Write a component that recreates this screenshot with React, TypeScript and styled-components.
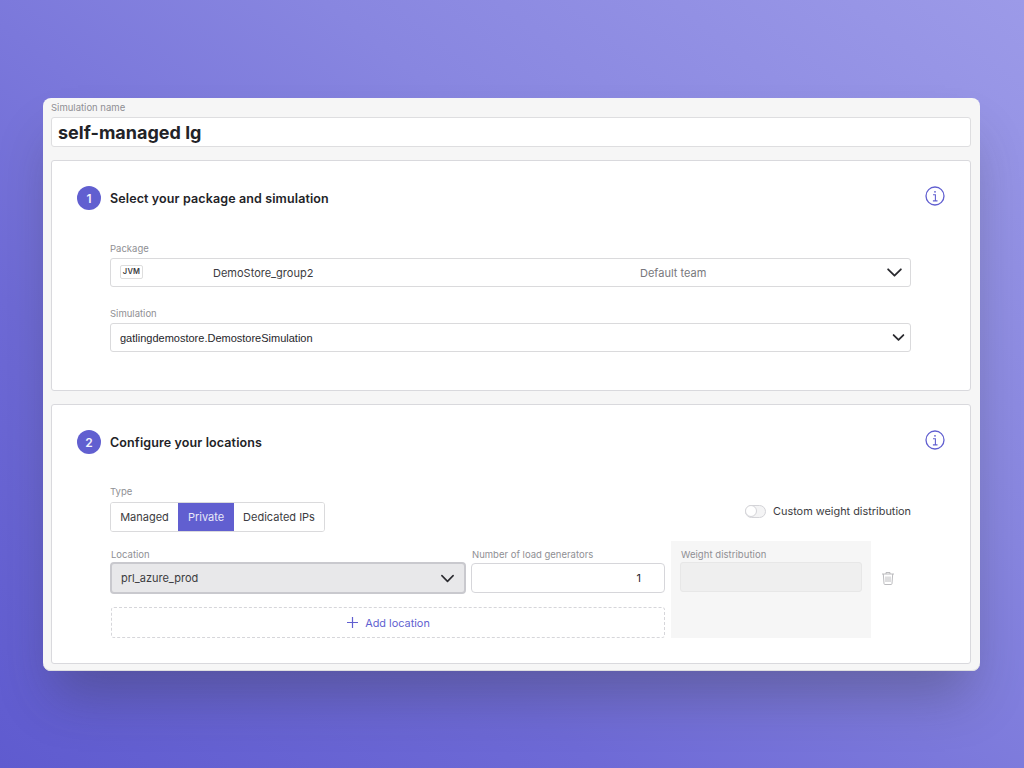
import React from 'react';
import styled, { createGlobalStyle } from 'styled-components';

const GlobalStyle = createGlobalStyle`
  html, body {
    margin: 0;
    padding: 0;
  }
  body {
    font-family: Inter, "Liberation Sans", sans-serif;
    color: #26262b;
  }
`;

const Page = styled.div`
  width: 1024px;
  height: 768px;
  box-sizing: border-box;
  padding: 98px 44px 0 43px;
  overflow: hidden;
  background: linear-gradient(218deg, #9c9ae8 0%, #8886e0 35%, #6e6ad6 70%, #5f5bcf 100%);
`;

const Card = styled.main`
  height: 573px;
  box-sizing: border-box;
  padding: 0 9px 0 8px;
  background: #f6f6f6;
  border-radius: 8px;
  box-shadow: inset 0 -1px 0 #dedee0, 0 34px 50px -10px rgba(50, 50, 50, 0.32);
`;

const NameField = styled.div`
  height: 50px;
  padding-top: 4px;
  box-sizing: border-box;
`;

const NameInput = styled.div`
  height: 30px;
  box-sizing: border-box;
  margin-top: 4px;
  padding-left: 6px;
  display: flex;
  align-items: center;
  background: #fff;
  border: 1px solid #dedee0;
  border-radius: 3px;
  font-size: 18px;
  font-weight: 700;
  color: #232327;
`;

const Label = styled.div`
  font-size: 9.5px;
  line-height: 11px;
  color: #8f8f94;
`;

const Section = styled.section<{ $height: number }>`
  height: ${p => p.$height}px;
  box-sizing: border-box;
  margin-top: 13px;
  padding: 25px 25px 0 25px;
  background: #fff;
  border: 1px solid #d9d9dd;
  border-radius: 3px;
  &:first-of-type {
    margin-top: 12px;
  }
`;

const SectionHead = styled.div`
  display: flex;
  align-items: flex-start;
  height: 24px;
`;

const StepBadge = styled.div`
  width: 24px;
  height: 24px;
  border-radius: 50%;
  display: flex;
  align-items: center;
  justify-content: center;
  background: #615fd0;
  color: #f4f4fc;
  font-size: 12px;
  font-weight: 600;
`;

const SectionTitle = styled.h2`
  flex: 1;
  margin: 0 0 0 9px;
  padding-top: 1px;
  font-size: 12.5px;
  line-height: 24px;
  font-weight: 600;
  letter-spacing: 0.12px;
  color: #232327;
`;

const InfoIcon = styled.svg`
  width: 20px;
  height: 20px;
`;

const SectionBody = styled.div`
  width: 801px;
  margin-left: 33px;
`;

const SelectBox = styled.div`
  height: 29px;
  margin-top: 4px;
  box-sizing: border-box;
  position: relative;
  display: flex;
  align-items: center;
  background: #fff;
  border: 1px solid #dadadc;
  border-radius: 3px;
  font-size: 11px;
  color: #3c3c41;
`;

const JvmBadge = styled.span`
  width: 23px;
  height: 14px;
  margin: -2px 0 0 9px;
  box-sizing: border-box;
  display: flex;
  align-items: center;
  justify-content: center;
  border: 1px solid #dedede;
  border-radius: 2px;
  font-size: 7.5px;
  font-weight: 600;
  letter-spacing: 0.2px;
  color: #3b3b40;
`;

const PackageName = styled.span`
  width: 427px;
  margin-left: 70px;
`;

const TeamName = styled.span`
  flex: 1;
  color: #77777c;
`;

const Chevron = styled.svg<{ $size: number; $inset: number }>`
  position: absolute;
  top: 50%;
  right: ${p => p.$inset}px;
  width: ${p => p.$size}px;
  height: ${p => p.$size}px;
  margin-top: ${p => -p.$size / 2}px;
`;

const NativeValue = styled.span`
  margin-left: 9px;
  font-family: "Liberation Sans", Arial, sans-serif;
  font-size: 11px;
  color: #26262b;
`;

const PackageBlock = styled.div`
  margin-top: 33px;
`;

const SimulationBlock = styled.div`
  margin-top: 21px;
`;

const TypeRow = styled.div`
  margin-top: 32px;
  display: flex;
  justify-content: space-between;
  align-items: flex-end;
`;

const Segmented = styled.div`
  display: flex;
  height: 30px;
  margin-top: 5px;
  box-sizing: border-box;
  border: 1px solid #dadadc;
  border-radius: 3px;
  overflow: hidden;
`;

const Segment = styled.div<{ $active?: boolean; $width: number }>`
  width: ${p => p.$width}px;
  display: flex;
  align-items: center;
  justify-content: center;
  font-size: 11px;
  color: ${p => (p.$active ? '#e9e9f8' : '#3c3c41')};
  background: ${p => (p.$active ? '#615fd0' : '#fff')};
`;

const WeightToggle = styled.div`
  display: flex;
  align-items: center;
  height: 14px;
  margin-bottom: 14px;
  font-size: 10.9px;
  color: #3c3c41;
`;

const ToggleTrack = styled.span`
  width: 21px;
  height: 13px;
  margin-right: 7px;
  box-sizing: border-box;
  border: 1.5px solid #d4d4d8;
  border-radius: 7px;
  position: relative;
  background: #f4f4f5;
  &::before {
    content: '';
    position: absolute;
    left: -1px;
    top: -1px;
    width: 12px;
    height: 12px;
    box-sizing: border-box;
    border: 1px solid #d4d4d8;
    border-radius: 50%;
    background: #fff;
  }
`;

const LocationRow = styled.div`
  margin-top: 9px;
  display: flex;
  align-items: flex-start;
`;

const LocationMain = styled.div`
  width: 555px;
  padding-top: 8px;
`;

const LocationFields = styled.div`
  display: grid;
  grid-template-columns: 356px 194px;
  column-gap: 5px;
`;

const LocationLabel = styled(Label)<{ $indent?: number }>`
  margin-left: ${p => p.$indent ?? 0}px;
`;

const FocusedSelect = styled.div`
  height: 32px;
  margin-top: 2px;
  box-sizing: border-box;
  position: relative;
  display: flex;
  align-items: center;
  padding-left: 9px;
  background: #e8e8ea;
  border: 2px solid #c9c9ce;
  border-radius: 4px;
  font-size: 11px;
  color: #3c3c41;
`;

const NumberInput = styled.div`
  height: 30px;
  margin-top: 3px;
  box-sizing: border-box;
  display: flex;
  align-items: center;
  justify-content: flex-end;
  padding-right: 23px;
  border: 1px solid #d6d6da;
  border-radius: 4px;
  font-size: 11px;
  color: #26262b;
`;

const AddLocation = styled.div`
  height: 31px;
  margin: 13px 0 0 1px;
  width: 554px;
  box-sizing: border-box;
  display: flex;
  align-items: center;
  justify-content: center;
  gap: 6px;
  border: 1px dashed #d6d6da;
  border-radius: 3px;
  font-size: 10.9px;
  color: #615fd0;
`;

const WeightPanel = styled.div`
  width: 200px;
  height: 97px;
  margin-left: 6px;
  box-sizing: border-box;
  padding: 8px 9px 0;
  background: #f6f6f6;
`;

const WeightLabel = styled(Label)`
  margin-left: 1px;
  letter-spacing: 0.05px;
`;

const WeightInput = styled.div`
  height: 30px;
  margin-top: 2px;
  box-sizing: border-box;
  background: #efefef;
  border: 1px solid #e7e7e7;
  border-radius: 3px;
`;

const TrashIcon = styled.svg`
  width: 14px;
  height: 14px;
  margin: 30px 0 0 10px;
`;

const Info = () => (
  <InfoIcon viewBox="0 0 20 20" fill="none" stroke="#615fd0" strokeWidth="1.3">
    <circle cx="10" cy="10" r="9" />
    <path d="M8 8.7h2.4v6M7.9 14.9h4.6" strokeWidth="1.1" />
    <circle cx="10" cy="5.8" r="0.9" fill="#615fd0" stroke="none" />
  </InfoIcon>
);

const Down = ({ size, inset, weight = 1.7 }: { size: number; inset: number; weight?: number }) => (
  <Chevron
    $size={size}
    $inset={inset}
    viewBox="0 0 16 16"
    fill="none"
    stroke="#2a2a2f"
    strokeWidth={weight}
    strokeLinecap="round"
    strokeLinejoin="round"
  >
    <path d="M2 5l6 6 6-6" />
  </Chevron>
);

export default function App() {
  return (
    <Page>
      <GlobalStyle />
      <Card>
        <NameField>
          <Label>Simulation name</Label>
          <NameInput>self-managed lg</NameInput>
        </NameField>

        <Section $height={231}>
          <SectionHead>
            <StepBadge>1</StepBadge>
            <SectionTitle>Select your package and simulation</SectionTitle>
            <Info />
          </SectionHead>
          <SectionBody>
            <PackageBlock>
              <Label>Package</Label>
              <SelectBox>
                <JvmBadge>JVM</JvmBadge>
                <PackageName>DemoStore_group2</PackageName>
                <TeamName>Default team</TeamName>
                <Down size={17} inset={7} />
              </SelectBox>
            </PackageBlock>
            <SimulationBlock>
              <Label>Simulation</Label>
              <SelectBox>
                <NativeValue>gatlingdemostore.DemostoreSimulation</NativeValue>
                <Down size={13} inset={5} weight={2.2} />
              </SelectBox>
            </SimulationBlock>
          </SectionBody>
        </Section>

        <Section $height={260}>
          <SectionHead>
            <StepBadge>2</StepBadge>
            <SectionTitle>Configure your locations</SectionTitle>
            <Info />
          </SectionHead>
          <SectionBody>
            <TypeRow>
              <div>
                <Label>Type</Label>
                <Segmented>
                  <Segment $width={67}>Managed</Segment>
                  <Segment $width={56} $active>Private</Segment>
                  <Segment $width={90}>Dedicated IPs</Segment>
                </Segmented>
              </div>
              <WeightToggle>
                <ToggleTrack />
                Custom weight distribution
              </WeightToggle>
            </TypeRow>
            <LocationRow>
              <LocationMain>
                <LocationFields>
                  <div>
                    <LocationLabel $indent={1}>Location</LocationLabel>
                    <FocusedSelect>
                      prl_azure_prod
                      <Down size={15} inset={9} />
                    </FocusedSelect>
                  </div>
                  <div>
                    <LocationLabel $indent={1}>Number of load generators</LocationLabel>
                    <NumberInput>1</NumberInput>
                  </div>
                </LocationFields>
                <AddLocation>
                  <svg width="13" height="13" viewBox="0 0 13 13" fill="none" stroke="#615fd0" strokeWidth="1.2">
                    <path d="M6.5 1v11M1 6.5h11" />
                  </svg>
                  Add location
                </AddLocation>
              </LocationMain>
              <WeightPanel>
                <WeightLabel>Weight distribution</WeightLabel>
                <WeightInput />
              </WeightPanel>
              <TrashIcon viewBox="0 0 14 14" fill="none" stroke="#b4b4b8" strokeWidth="0.9">
                <path d="M1 3h12M5 3V1.5h4V3M2.3 3l.7 9.6c0 .5.4.9.9.9h6.2c.5 0 .9-.4.9-.9l.7-9.6" />
                <path d="M5 5.5v5.5M7 5.5v5.5M9 5.5v5.5" />
              </TrashIcon>
            </LocationRow>
          </SectionBody>
        </Section>
      </Card>
    </Page>
  );
}
